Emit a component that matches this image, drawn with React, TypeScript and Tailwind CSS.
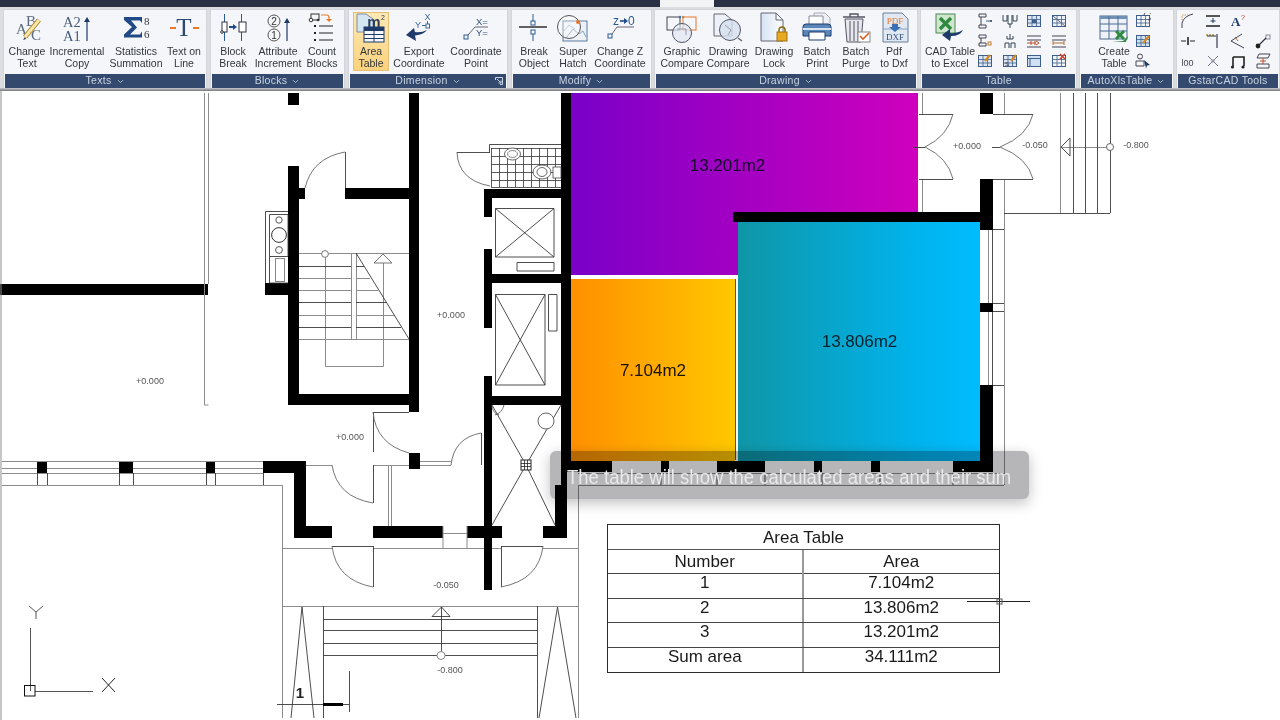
import type { ReactNode } from "react";
import { ChevronDown } from "lucide-react";

const SERIF = "[font-family:'Liberation_Serif',serif]";
const BLUE = "#1f4a86";
const NAVY = "#1d3a6b";
const ORANGE = "#e8792b";

function Ico({ w = 36, children }: { w?: number; children: ReactNode }) {
  return (
    <svg width={w} height={36} viewBox={`0 0 ${w} 36`} fill="none">
      {children}
    </svg>
  );
}

function Mini({ children }: { children: ReactNode }) {
  return (
    <svg width={16} height={16} viewBox="0 0 16 16" fill="none">
      {children}
    </svg>
  );
}

function MiniTable({ fill = "#dce6f2" }: { fill?: string }) {
  return (
    <>
      <rect x="1.5" y="2.5" width="13" height="11" fill={fill} stroke="#3f5f8a" />
      <path d="M1.5 6.5h13M1.5 10h13M6 2.5v11M10.5 2.5v11" stroke="#3f5f8a" strokeWidth=".8" />
    </>
  );
}

const icons = {
  changeText: (
    <Ico w={40}>
      <g className={SERIF} fill="#5a6a80">
        <text x="9" y="24" fontSize="15">A</text>
        <text x="19" y="16" fontSize="15">B</text>
        <text x="24" y="30" fontSize="15">C</text>
      </g>
      <path d="M32 10 L18 27" stroke="#a88a30" strokeWidth="5" />
      <path d="M32 10 L18 27" stroke="#fbe6a8" strokeWidth="3" />
      <path d="M18 27l-2 3 3-1z" fill="#333" />
    </Ico>
  ),
  incremental: (
    <Ico w={36}>
      <g className={SERIF} fill="#445a78" fontSize="14.5">
        <text x="4" y="17">A2</text>
        <text x="4" y="31">A1</text>
      </g>
      <path d="M28 31V10" stroke={NAVY} strokeWidth="1.2" />
      <path d="M28 7l-3 5h6z" fill={NAVY} />
    </Ico>
  ),
  statistics: (
    <Ico w={36}>
      <path d="M6 7h18v6l-2-2.500H13l6 7-7 7h10l2-3v6H6v-3l8-7.500-8-7z" fill={BLUE} />
      <g className={SERIF} fill="#333" fontSize="11">
        <text x="26" y="15">8</text>
        <text x="26" y="28">6</text>
      </g>
    </Ico>
  ),
  textOnLine: (
    <Ico w={36}>
      <path d="M4 18h6M27 18h6" stroke={ORANGE} strokeWidth="2" />
      <text x="18" y="26" textAnchor="middle" className={SERIF} fontSize="25" fill="#2c4a70">T</text>
    </Ico>
  ),
  blockBreak: (
    <Ico w={32}>
      <path d="M7.500 4v27M24.500 4v27" stroke="#2a5a90" />
      <rect x="5" y="12" width="5" height="10" fill="#fff" stroke="#334" />
      <rect x="22" y="12" width="7" height="10" fill="#fff" stroke="#334" />
      <path d="M12 17h5" stroke={BLUE} strokeWidth="2" />
      <path d="M16 14l4 3-4 3z" fill={BLUE} />
      <circle cx="5" cy="22" r="1.300" fill="#fff" stroke="#333" />
    </Ico>
  ),
  attribute: (
    <Ico w={32}>
      <circle cx="12" cy="11" r="6" stroke="#555" />
      <circle cx="12" cy="25" r="6" stroke="#555" />
      <text x="12" y="14.500" textAnchor="middle" fontSize="10" fill="#333">2</text>
      <text x="12" y="28.500" textAnchor="middle" fontSize="10" fill="#333">1</text>
      <path d="M25 31V11" stroke={NAVY} strokeWidth="1.2" />
      <path d="M25 8l-3 5h6z" fill={NAVY} />
    </Ico>
  ),
  countBlocks: (
    <Ico w={32}>
      <rect x="5" y="4" width="8" height="6" stroke="#333" />
      <circle cx="5" cy="10" r="1.800" stroke="#333" fill="#fff" />
      <circle cx="12" cy="10" r="1.300" fill="#333" />
      <path d="M15 5h6q2 0 2 3v1" stroke={ORANGE} strokeWidth="1.2" />
      <path d="M20 9h6l-3 3z" fill={ORANGE} />
      <path d="M13 16h14M13 23h14M13 30h14" stroke="#222" />
      <path d="M8 16h2M8 23h2M8 30h2" stroke="#222" strokeWidth="2" />
    </Ico>
  ),
  areaTable: (
    <Ico w={36}>
      <path d="M4 2h9l7 5v13H4z" fill="#d5e5f2" stroke="#7a8ca5" />
      <text x="21" y="15" textAnchor="middle" fontSize="15" fontWeight="700" fill="#2c3e5a">m</text>
      <text x="30" y="8" fontSize="7" textAnchor="middle" fill="#2c3e5a">2</text>
      <rect x="11" y="15" width="20" height="15" fill="#f5f7fa" stroke={NAVY} />
      <rect x="11" y="15" width="20" height="4" fill={NAVY} />
      <path d="M11 22.500h20M11 26.500h20M21 19v11" stroke={NAVY} />
    </Ico>
  ),
  exportCoord: (
    <Ico w={40}>
      <text x="16" y="18" fontSize="9" fill="#3a6aa0">Y</text>
      <text x="28.500" y="10" fontSize="9" fill="#3a6aa0" textAnchor="middle">X</text>
      <path d="M23 15.500h4M28.500 11v3" stroke="#3a6aa0" />
      <rect x="27" y="14" width="3.500" height="4" stroke="#3a6aa0" />
      <path d="M28 20q-3 4-9 5l-3 .500 1 5.500-10-6 8-7 1 4q6 1 12-2z" fill={NAVY} />
    </Ico>
  ),
  coordPoint: (
    <Ico w={40}>
      <g fontSize="9.500" fill="#34527a">
        <text x="20" y="15">X=</text>
        <text x="20" y="26">Y=</text>
      </g>
      <path d="M12 25l7-8h13" stroke="#667" />
      <rect x="8" y="25" width="4" height="4" stroke="#2a5a90" />
    </Ico>
  ),
  breakObject: (
    <Ico w={36}>
      <path d="M3 17h28" stroke="#222" strokeWidth="1.400" />
      <path d="M17 4v11M17 20v11" stroke="#2a5a90" />
      <rect x="15" y="11" width="4" height="4" fill="#fff" stroke="#2a5a90" />
      <rect x="15" y="20" width="4" height="4" fill="#fff" stroke="#2a5a90" />
    </Ico>
  ),
  superHatch: (
    <Ico w={32}>
      <rect x="6" y="11" width="24" height="20" fill="#eef2f8" stroke="#5a7aa0" />
      <path d="M9 28l7-9 6 5 4-3 3 6" stroke="#8aa0bc" />
      <path d="M6 22l6-7 6 4" stroke="#aabbd0" />
      <circle cx="12" cy="17" r="11.500" stroke="#555" fill="#fff" fillOpacity=".3" />
      <circle cx="21" cy="12" r="2" fill={ORANGE} />
    </Ico>
  ),
  changeZ: (
    <Ico w={40}>
      <text x="13" y="15" fontSize="12" fill="#2a5a90">z</text>
      <path d="M20 11h5" stroke={BLUE} strokeWidth="1.600" />
      <path d="M24 8l4 3-4 3z" fill={BLUE} />
      <text x="28" y="15" fontSize="12" fill="#2a5a90">0</text>
      <path d="M12 24l5-7h17" stroke="#667" />
      <rect x="8" y="24" width="4" height="4" stroke="#2a5a90" />
    </Ico>
  ),
  graphicCompare: (
    <Ico w={32}>
      <rect x="1" y="7" width="13" height="13" stroke="#445" />
      <rect x="17" y="7" width="13" height="13" stroke={ORANGE} />
      <circle cx="14" cy="7" r="1.200" fill="#2a7ab0" />
      <circle cx="17" cy="7" r="1.200" fill="#c08050" />
      <circle cx="16" cy="23" r="9.500" fill="#dfe7f2" fillOpacity=".7" stroke="#556" />
      <path d="M11 19h9M20 19v6" stroke="#99a" />
    </Ico>
  ),
  drawingCompare: (
    <Ico w={32}>
      <path d="M2 4h11l7 6v16H2z" fill="#eef2f8" stroke="#667" />
      <circle cx="18" cy="20" r="10.500" fill="#d5e0ee" fillOpacity=".8" stroke="#556" />
      <path d="M13 15l6 5-3 5" stroke="#99a" />
      <path d="M26 28l4 3" stroke="#667" strokeWidth="1.500" />
    </Ico>
  ),
  drawingLock: (
    <Ico w={32}>
      <defs>
        <linearGradient id="pageFill" x1="0" y1="0" x2="1" y2="0">
          <stop offset="0" stopColor="#d5e2f4" />
          <stop offset="1" stopColor="#fff" />
        </linearGradient>
      </defs>
      <path d="M3 3h15l7 7v21H3z" fill="url(#pageFill)" stroke="#667" />
      <path d="M18 3v7h7" stroke="#667" />
      <path d="M21 22v-2q0-3 3-3t3 3v2" stroke="#8a6a10" strokeWidth="1.500" />
      <rect x="19" y="22" width="10" height="9" fill="#e8a820" stroke="#a07010" />
    </Ico>
  ),
  batchPrint: (
    <Ico w={32}>
      <path d="M13 3h11l5 5v12H13z" fill="#eef0f3" stroke="#aab" />
      <path d="M8 6h14v10H8z" fill="#fff" stroke="#889" />
      <path d="M2 17q0-3 3-3h22q3 0 3 3v9H2z" fill="#5a86ba" stroke={NAVY} />
      <path d="M2 19h28" stroke="#d5e3f2" strokeWidth="2" />
      <path d="M8 22h16v8H8z" fill="#fff" stroke={NAVY} />
    </Ico>
  ),
  batchPurge: (
    <Ico w={32}>
      <path d="M3 7h22M10 7V4h8v3" stroke="#556" strokeWidth="1.400" />
      <path d="M5 9h18l-2 23H7z" fill="#e6e8ec" stroke="#556" />
      <path d="M10 11v20M14 11v20M18 11v20" stroke="#556" />
      <rect x="18" y="22" width="12" height="10" fill="#fff" stroke="#888" />
      <path d="M20 26l3 3 6-6" stroke="#d8602a" strokeWidth="1.600" />
    </Ico>
  ),
  pdfDxf: (
    <Ico w={32}>
      <path d="M5 3h19l6 6v23H5z" fill="#dfe8f3" stroke="#6a7f9a" />
      <path d="M5 19h25" stroke="#8aa0bc" />
      <text x="17" y="14" textAnchor="middle" fontSize="9" fill={ORANGE} className={SERIF}>PDF</text>
      <text x="17" y="30" textAnchor="middle" fontSize="9" fill="#34527a" className={SERIF}>DXF</text>
      <path d="M14 14h6v3h3l-6 5-6-5h3z" fill="#3a6fb5" />
    </Ico>
  ),
  excel: (
    <Ico w={36}>
      <rect x="4" y="4" width="19" height="19" fill="#cfe6cf" stroke="#4a8a50" />
      <path d="M8 8l11 11M19 8L8 19" stroke="#2d8a3e" strokeWidth="3.400" />
      <path d="M31 20q-3 6-12 6l-1 5-8-6 8-6v4q7 1 13-3z" fill={NAVY} />
    </Ico>
  ),
  createTable: (
    <Ico w={32}>
      <rect x="2" y="6" width="27" height="23" fill="#eef2f8" stroke="#4a6a92" />
      <rect x="2" y="6" width="27" height="3" fill="#7090b5" />
      <path d="M2 14h27M2 21h27M11 6v23M20 6v23" stroke="#4a6a92" />
      <path d="M18 21l8 8M26 21l-8 8" stroke="#2d8a3e" strokeWidth="3" />
      <path d="M14 32l11-1 5-5-2 6z" fill="#3a8a4a" />
    </Ico>
  ),
};

const tableMinis = [
  <Mini><path d="M2 1h7v3H2zM4 4v8M2 12h7v3H2z" stroke="#445" /><path d="M9 8h4" stroke="#2a5a90" /><circle cx="14" cy="8" r="1" fill="#333" /></Mini>,
  <Mini><path d="M1 2v6h4V2M6 2v9h4V2M11 2v6h4V2" stroke="#345" /><path d="M8 11v4" stroke="#345" /></Mini>,
  <Mini><MiniTable /><rect x="6" y="6.500" width="4.500" height="3.500" fill="#3f5f8a" /></Mini>,
  <Mini><MiniTable fill="#eef2f8" /><path d="M2 3l12 10" stroke="#667" /></Mini>,
  <Mini><path d="M2 2h7v3H2zM2 10h7v3H2zM4 5v5" stroke="#445" /><rect x="11" y="9" width="3" height="3" stroke="#c87a2a" /></Mini>,
  <Mini><path d="M8 1v5M5 3v3h6V3M3 15v-5h4v5M9 15v-5h4v5" stroke="#345" /></Mini>,
  <Mini><path d="M1 3h14M1 7h14M1 14h14" stroke="#445" /><path d="M1 10h9M10 8l3 2-3 2M5 8v4M9 8v4" stroke="#c0512a" /></Mini>,
  <Mini><path d="M1 3h14M1 7h14M1 14h14" stroke="#445" /><path d="M2 10h11M2 8v4M13 8v4" stroke="#b07030" /></Mini>,
  <Mini><MiniTable /><path d="M13 2L8 8" stroke="#d88a20" strokeWidth="2.200" /></Mini>,
  <Mini><MiniTable /><path d="M14 2L9 8" stroke="#d88a20" strokeWidth="2.200" /><text x="3" y="13" fontSize="6" fill="#333">S</text></Mini>,
  <Mini><rect x="1.500" y="2.500" width="13" height="11" fill="#cfe0f2" stroke="#3f5f8a" /><path d="M1.500 5.500h13M4 5.500v8" stroke="#3f5f8a" /></Mini>,
  <Mini><MiniTable fill="#f4f6fa" /><path d="M9 1l5 5M14 1L9 6" stroke="#d8402a" strokeWidth="1.600" /></Mini>,
];

const autoMinis = [
  <Mini><MiniTable fill="#f4f6fa" /><path d="M9 2a4 4 0 1 1 4 5" stroke="#445" /></Mini>,
  <Mini><MiniTable fill="#cfe0f2" /><path d="M14 3L8 10" stroke="#d88a20" strokeWidth="2.200" /></Mini>,
  <Mini><circle cx="5" cy="3.500" r="2.500" stroke="#445" /><path d="M1 13V8h8v5z" stroke="#445" /><path d="M9 7l6 5-3 .5-1 3z" fill={NAVY} /></Mini>,
];

const gstarMinis = [
  <Mini><path d="M2 15V10Q4 3 13 1" stroke="#445" /><path d="M2 7V2h6" stroke="#d89a5a" strokeDasharray="1.500 1" /></Mini>,
  <Mini><path d="M1 3h14M1 13h14" stroke="#222" strokeWidth="1.400" /><path d="M8 5v5M5.500 8h5" stroke={NAVY} /></Mini>,
  <Mini><text x="1" y="13" fontSize="13" fontWeight="700" fill={NAVY} className={SERIF}>A</text><text x="11" y="7" fontSize="7" fill="#c0402a">?</text></Mini>,
  <div className="w-4 h-4" />,
  <Mini><path d="M1 8h5M10 8h5" stroke="#222" /><path d="M8 4v8" stroke="#222" strokeWidth="1.600" /></Mini>,
  <Mini><path d="M1 2h9" stroke="#b09040" strokeDasharray="2 1" strokeWidth="1.400" /><path d="M12 1v14" stroke="#556" strokeWidth="1.400" /><path d="M2 3h9" stroke="#333" /></Mini>,
  <Mini><path d="M1 8L12 1M1 8l13 7" stroke="#445" /><path d="M5 4l3 4" stroke="#b07030" /></Mini>,
  <Mini><rect x="11" y="2" width="4" height="4" stroke="#889" /><path d="M2 14l9-9" stroke="#334" strokeWidth="1.200" /><circle cx="3" cy="13" r="2.400" fill="#222" /></Mini>,
  <span className="text-[9px] leading-none text-[#445]">l00</span>,
  <Mini><path d="M3 3l10 10M13 3L3 13" stroke="#778" /><rect x="6.500" y="6.500" width="3" height="3" fill="#99a" /></Mini>,
  <Mini><path d="M3 4h11v9M3 4v9" stroke="#222" strokeWidth="1.600" /><circle cx="2.500" cy="14" r="1.600" fill="#222" /><circle cx="13" cy="14" r="1.600" fill="#222" /></Mini>,
  <Mini><path d="M4 1h11l-2 4H2zM2 11h12v4H2z" stroke="#445" /><path d="M8 5v6M5 8h6" stroke="#c0512a" /></Mini>,
];

type Btn = { lines: [string, string]; icon: ReactNode; cls: string; active?: boolean };

function RibbonButton({ lines, icon, cls, active }: Btn) {
  return (
    <div
      className={`flex flex-col items-center shrink-0 whitespace-nowrap ${cls} ${
        active ? "bg-gradient-to-b from-[#fde9b4] to-[#fbd27c] border border-[#e6bf76]" : ""
      }`}
    >
      <div className={`flex items-center justify-center ${active ? "h-[33px]" : "h-[36px]"}`}>{icon}</div>
      <span className="text-[10.5px] leading-[11.5px] text-[#33373d]">{lines[0]}</span>
      <span className="text-[10.5px] leading-[11.5px] text-[#33373d]">{lines[1]}</span>
    </div>
  );
}

function Panel({
  title,
  cls,
  launcher,
  noChevron,
  children,
}: {
  title: string;
  cls: string;
  launcher?: boolean;
  noChevron?: boolean;
  children: ReactNode;
}) {
  return (
    <section className={`shrink-0 h-[79px] flex flex-col bg-[#f4f6f9] border-x border-t border-[#d3d5da] ${cls}`}>
      <div className="h-[64px] pl-px flex items-start">{children}</div>
      <div className="relative mx-px h-[14px] bg-[#33496d] flex items-center justify-center gap-1 text-[10.5px] tracking-[0.3px] text-[#c9d4e2]">
        {title}
        {!noChevron && <ChevronDown size={9} strokeWidth={2} />}
        {launcher && (
          <svg className="absolute right-[3px] top-[3px]" width="8" height="8" viewBox="0 0 8 8" fill="none">
            <path d="M.5 3V.5H7.5V7.5H5" stroke="#c9d4e2" />
            <path d="M2 2l4 4M6 3.500V6H3.500" stroke="#c9d4e2" />
          </svg>
        )}
      </div>
    </section>
  );
}

function Ribbon() {
  return (
    <header className="h-[91px] shrink-0 flex flex-col bg-[#dcdde1]">
      <div className="h-[7px] bg-[#2a3145] pl-[660px]">
        <div className="w-[54px] h-[7px] bg-[#f2f3f5]" />
      </div>
      <div className="flex mt-[2px]">
        <Panel title="Texts" cls="w-[204px] ml-[3px]">
          <RibbonButton lines={["Change", "Text"]} icon={icons.changeText} cls="w-[44px]" />
          <RibbonButton lines={["Incremental", "Copy"]} icon={icons.incremental} cls="w-[56px]" />
          <RibbonButton lines={["Statistics", "Summation"]} icon={icons.statistics} cls="w-[62px]" />
          <RibbonButton lines={["Text on", "Line"]} icon={icons.textOnLine} cls="w-[34px]" />
        </Panel>
        <Panel title="Blocks" cls="w-[135px] ml-[3px]">
          <RibbonButton lines={["Block", "Break"]} icon={icons.blockBreak} cls="w-[42px]" />
          <RibbonButton lines={["Attribute", "Increment"]} icon={icons.attribute} cls="w-[48px]" />
          <RibbonButton lines={["Count", "Blocks"]} icon={icons.countBlocks} cls="w-[40px]" />
        </Panel>
        <Panel title="Dimension" cls="w-[160px] ml-[3px]" launcher>
          <RibbonButton lines={["Area", "Table"]} icon={icons.areaTable} cls="w-[36px] ml-[3px] mt-[2px] h-[59px]" active />
          <RibbonButton lines={["Export", "Coordinate"]} icon={icons.exportCoord} cls="w-[60px]" />
          <RibbonButton lines={["Coordinate", "Point"]} icon={icons.coordPoint} cls="w-[54px]" />
        </Panel>
        <Panel title="Modify" cls="w-[141px] ml-[3px]">
          <RibbonButton lines={["Break", "Object"]} icon={icons.breakObject} cls="w-[42px]" />
          <RibbonButton lines={["Super", "Hatch"]} icon={icons.superHatch} cls="w-[36px]" />
          <RibbonButton lines={["Change Z", "Coordinate"]} icon={icons.changeZ} cls="w-[58px]" />
        </Panel>
        <Panel title="Drawing" cls="w-[264px] ml-[2px]">
          <RibbonButton lines={["Graphic", "Compare"]} icon={icons.graphicCompare} cls="w-[50px] ml-px" />
          <RibbonButton lines={["Drawing", "Compare"]} icon={icons.drawingCompare} cls="w-[42px]" />
          <RibbonButton lines={["Drawing", "Lock"]} icon={icons.drawingLock} cls="w-[50px]" />
          <RibbonButton lines={["Batch", "Print"]} icon={icons.batchPrint} cls="w-[36px]" />
          <RibbonButton lines={["Batch", "Purge"]} icon={icons.batchPurge} cls="w-[42px]" />
          <RibbonButton lines={["Pdf", "to Dxf"]} icon={icons.pdfDxf} cls="w-[34px]" />
        </Panel>
        <Panel title="Table" cls="w-[157px] ml-[2px]" noChevron>
          <RibbonButton lines={["CAD Table", "to Excel"]} icon={icons.excel} cls="w-[46px] ml-[5px]" />
          <div className="grid grid-cols-4 w-[98px] auto-rows-[20px] place-items-center pt-px">
            {tableMinis.map((m, i) => (
              <div key={i}>{m}</div>
            ))}
          </div>
        </Panel>
        <Panel title="AutoXlsTable" cls="w-[95px] ml-[2px]">
          <RibbonButton lines={["Create", "Table"]} icon={icons.createTable} cls="w-[42px] ml-[12px]" />
          <div className="grid grid-cols-1 w-[16px] auto-rows-[20px] place-items-center pt-px">
            {autoMinis.map((m, i) => (
              <div key={i}>{m}</div>
            ))}
          </div>
        </Panel>
        <Panel title="GstarCAD Tools" cls="w-[104px] ml-[2px]" noChevron>
          <div className="grid grid-cols-4 w-[100px] -ml-[3px] auto-rows-[20px] place-items-center pt-px">
            {gstarMinis.map((m, i) => (
              <div key={i}>{m}</div>
            ))}
          </div>
        </Panel>
      </div>
      <div className="flex-1 bg-gradient-to-b from-[#c9c9cf] to-[#77777f]" />
    </header>
  );
}

// x1, y1, x2, y2 in screen pixels
const walls = [
  [0, 284, 208, 295], [265, 283, 288, 295], [288, 93, 299, 105], [288, 166, 299, 405], [299, 188, 305, 199],
  [345, 188, 410, 199], [409, 93, 419, 412], [288, 394, 410, 405], [409, 453, 420, 469],
  [561, 93, 571, 472], [561, 470, 567, 486], [484, 189, 561, 198], [484, 189, 492, 217], [484, 249, 492, 328],
  [484, 274, 561, 283], [484, 376, 492, 590], [484, 396, 561, 405],
  [37, 461, 47, 473], [119, 461, 133, 473], [206, 461, 215, 473], [263, 461, 306, 473], [294, 461, 306, 538],
  [294, 526, 332, 538], [373, 526, 443, 538], [467, 526, 502, 538], [543, 526, 567, 538], [555, 485, 567, 538],
  [561, 461, 612, 472], [661, 461, 669, 472], [717, 461, 765, 472], [814, 461, 822, 472], [871, 461, 880, 472],
  [953, 461, 993, 472], [733, 212, 993, 222], [980, 93, 993, 114], [980, 179, 993, 230], [980, 303, 993, 312],
  [980, 385, 993, 472],
];

const levels: [string, number, number][] = [
  ["+0.000", 150, 381], ["+0.000", 350, 437], ["+0.000", 451, 315], ["+0.000", 967, 146],
  ["-0.050", 446, 585], ["-0.050", 1035, 145], ["-0.800", 450, 670], ["-0.800", 1136, 145],
];

const GREY = "M1 91V720M204.5 93V405M208.5 93V284M204.5 405H208.5M2 461.5H263M2 468.5H37M47 468.5H119M133 468.5H206M215 468.5H263M2 473.5H263M2 485.5H282.5M282.5 485.5V718M578.5 485.5V718M282.5 548.5H332M373 548.5H484M492 548.5H501M543 548.5H578.5M282.5 606.5H578.5M443 533.5H467M443 526V548M467 526V548M306 465.5H332M373 465.5H409M420 461.5H451M420 465.5H451M388.5 465V526M391.5 465V526M299 253.5H409M299 339.5H409M325.5 253V366.5H383.5V253M351.5 253V339M356.5 253V339M299 278.5H351M356 278.5H370M299 290.5H351M356 290.5H378M299 315.5H351M356 315.5H394M922.5 93V114M922.5 179V212M1004.5 93V114M1004.5 180V485M1060.5 93V213M988.5 230V303M988.5 312V385M578 473.5H1004M578 485.5H1004M1061 147.5H1110";
const THIN = "M299 266.5H351M356 266.5H364M299 302.5H351M356 302.5H386M299 327.5H351M356 327.5H401M356 253L409 339M345.5 152V188M265.5 211.5H288M265.5 211.5V283M269.5 214.5H288V256M269.5 214.5V283H288M269.5 256.5H288M457 152.5H490M489.5 144.5H561M489.5 144.5V152M495.5 208.5H554V257H495.5ZM495.5 208.5L554 257M554 208.5L495.5 257M517 262.5H554V271H517ZM495.5 294.5H545V385H495.5ZM495.5 294.5L545 385M545 294.5L495.5 385M548.5 294.5H557V331H548.5ZM492 405L526 465L555 525M561 405L526 465L492 525M37.5 473V485M47.5 473V485M119.5 473V485M133.5 473V485M206.5 473V485M215.5 473V485M263.5 473V485M323.5 606V718M537.5 606V718M323 619.5H537M323 630.5H537M323 643.5H537M323 655.5H537M441.5 607V651M432 616.5H450L441.5 607ZM302 607L291 718M302 607L314 718M557.5 607L539 718M557.5 607L576 718M277 704.5H349M349.5 671V712M373.5 412V452M373.5 465V503M373.5 546V587M501.5 546V587M481.5 433V465M332 546.5H373M501 546.5H543M919 114.5H953M919 179.5H953M993 114.5H1033M993 179.5H1033M925 147.5H913M1000 147.5H992M1073.5 93V213M1085.5 93V213M1097.5 93V213M1110.5 93V213M1004 213.5H1110M992.5 230V303M992.5 312V385M993 229.5H1004M993 303.5H1004M993 311.5H1004M993 385.5H1004M373 412.5H409M661 473V485M717 473V485M765 473V485M822 473V485M880 473V485M953 473V485M1061 147L1070 138V156ZM735.5 279V460";
const ARCS = "M305 188Q312 158 345 152M457 152Q458 180 490 186M373 412Q376 444 409 453M481 433Q454 438 451 465M332 465Q337 497 373 503M332 546Q336 580 373 587M543 546Q539 580 501 587M953 114Q948 136 925 147M953 179Q948 158 925 147M1033 114Q1028 136 1000 147M1033 179Q1028 158 1000 147";

function Plan() {
  const tileX = [491, 499, 507, 515, 523, 531, 539, 547, 555];
  const tileY = [148, 156, 164, 172, 180, 187];
  return (
    <svg className="block" width={1280} height={629} viewBox="0 91 1280 629" fill="none">
      <defs>
        <linearGradient id="roomA" x1="0" y1="0" x2="1" y2="0">
          <stop offset="0" stopColor="#7a00c8" />
          <stop offset="1" stopColor="#cf00bd" />
        </linearGradient>
        <linearGradient id="roomB" x1="0" y1="0" x2="1" y2="0">
          <stop offset="0" stopColor="#ff8f00" />
          <stop offset="1" stopColor="#ffc800" />
        </linearGradient>
        <linearGradient id="roomC" x1="0" y1="0" x2="1" y2="0">
          <stop offset="0" stopColor="#0f96a6" />
          <stop offset=".75" stopColor="#00b4ee" />
          <stop offset="1" stopColor="#00bcff" />
        </linearGradient>
      </defs>
      <rect x="571" y="93" width="347" height="182" fill="url(#roomA)" />
      <rect x="571" y="279" width="164" height="182" fill="url(#roomB)" />
      <rect x="738" y="222" width="242" height="239" fill="url(#roomC)" />
      {walls.map(([x1, y1, x2, y2], i) => (
        <rect key={i} x={x1} y={y1} width={x2 - x1} height={y2 - y1} fill="#000" />
      ))}
      <path d={GREY} stroke="#8c8c8c" />
      <path d={THIN} stroke="#3a3a3a" strokeWidth=".9" />
      <path d={ARCS} stroke="#666" strokeWidth=".9" />
      {tileX.map((x) => (
        <path key={x} d={`M${x}.5 148V187`} stroke="#333" strokeWidth=".8" />
      ))}
      {tileY.map((y) => (
        <path key={y} d={`M491 ${y}.5H561`} stroke="#333" strokeWidth=".8" />
      ))}
      <ellipse cx="512.5" cy="154" rx="8" ry="6" fill="#fff" stroke="#444" strokeWidth=".8" />
      <ellipse cx="512.5" cy="154" rx="5" ry="3.5" stroke="#666" strokeWidth=".8" />
      <ellipse cx="542" cy="172" rx="9" ry="7" fill="#fff" stroke="#444" strokeWidth=".8" />
      <ellipse cx="542" cy="172" rx="5" ry="4.5" stroke="#444" strokeWidth=".8" />
      <rect x="553" y="167" width="8" height="11" fill="#fff" stroke="#444" strokeWidth=".8" />
      <circle cx="279" cy="220" r="3.2" stroke="#555" />
      <circle cx="279" cy="235" r="7.4" stroke="#333" />
      <circle cx="279" cy="250" r="3.4" stroke="#555" />
      <rect x="275.5" y="258.5" width="9" height="23" stroke="#888" />
      <circle cx="325" cy="254" r="3.4" fill="#fff" stroke="#777" />
      <path d="M383 254L392 263H374Z" fill="#fff" stroke="#777" />
      <circle cx="546" cy="421" r="8" fill="#fff" stroke="#666" />
      <rect x="521" y="460" width="10" height="10" fill="#fff" stroke="#222" />
      <path d="M521 463.5h10M521 466.5h10M524.5 460v10M527.5 460v10" stroke="#222" strokeWidth=".8" />
      <path d="M492 405q0 8 7 10M504 405q-2 8-9 10" stroke="#555" strokeWidth=".8" />
      <circle cx="441" cy="655.5" r="4" fill="#fff" stroke="#888" />
      <circle cx="1110" cy="147" r="3.5" fill="#fff" stroke="#666" />
      <path d="M323 704.5h20" stroke="#000" strokeWidth="3" />
      <path d="M30.5 628V691M35 691.5H93M29 606L36 612L43 606M36 612V619" stroke="#555" />
      <rect x="24.5" y="685.5" width="10.5" height="10.5" stroke="#111" />
      <path d="M102 678L115 692M115 678L102 692" stroke="#222" />
      {levels.map(([t, x, y], i) => (
        <text key={i} x={x} y={y + 3} textAnchor="middle" fontSize="9" fill="#555">
          {t}
        </text>
      ))}
      <text x="300" y="698" textAnchor="middle" fontSize="15" fontWeight="700" fill="#222">1</text>
      <text x="727.5" y="171" textAnchor="middle" fontSize="17" fill="#16082a">13.201m2</text>
      <text x="653" y="376" textAnchor="middle" fontSize="17" fill="#1c1204">7.104m2</text>
      <text x="859.5" y="347" textAnchor="middle" fontSize="17" fill="#04202c">13.806m2</text>
    </svg>
  );
}

const rows = [
  ["1", "7.104m2"],
  ["2", "13.806m2"],
  ["3", "13.201m2"],
  ["Sum area", "34.111m2"],
];

function AreaTable() {
  return (
    <div className="absolute left-[607px] top-[433px] w-[393px] border border-[#2c2c2c] bg-white text-[17px] text-[#1a1a1a]">
      <div className="h-[24.5px] leading-[26px] text-center border-b border-[#555]">Area Table</div>
      <div className="h-[24.5px] leading-[24px] grid grid-cols-2 text-center border-b border-[#444]">
        <div className="border-r-2 border-[#999]">Number</div>
        <div>Area</div>
      </div>
      {rows.map(([a, b], i) => (
        <div
          key={a}
          className={`h-[24.5px] leading-[18px] grid grid-cols-2 text-center ${i < rows.length - 1 ? "border-b border-[#444]" : ""}`}
        >
          <div className="border-r-2 border-[#999]">{a}</div>
          <div>{b}</div>
        </div>
      ))}
    </div>
  );
}

export default function App() {
  return (
    <div className="w-[1280px] h-[720px] flex flex-col overflow-hidden bg-white [font-family:'Liberation_Sans',sans-serif]">
      <Ribbon />
      <main className="relative flex-1">
        <Plan />
        <AreaTable />
        {/* crosshair cursor over the table edge */}
        <svg className="absolute left-[960px] top-[475px]" width="76" height="70" viewBox="0 0 76 70" fill="none">
          <path d="M7 35.5H70M39.5 4V67" stroke="#222" />
          <rect x="37" y="33" width="5" height="5" stroke="#555" />
        </svg>
        {/* video caption */}
        <div className="absolute left-[550px] top-[360px] w-[479px] h-[48px] rounded-md bg-[#b6b6b9] mix-blend-multiply shadow-[0_4px_14px_rgba(0,0,0,0.25)]" />
        <div className="absolute left-[550px] top-[362px] w-[479px] h-[48px] flex items-center justify-center text-[20px] text-[#e9e9ec] whitespace-nowrap">
          <span className="scale-x-[0.925]">The table will show the calculated areas and their sum</span>
        </div>
      </main>
    </div>
  );
}
